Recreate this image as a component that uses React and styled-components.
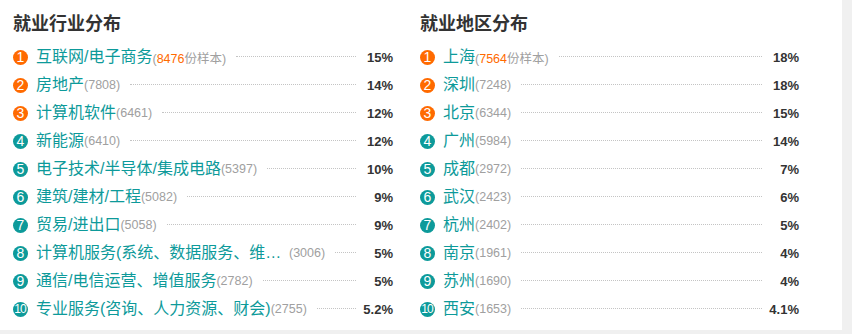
import React from 'react';
import styled, { createGlobalStyle } from 'styled-components';

const GlobalStyle = createGlobalStyle`
  body {
    margin: 0;
    background: #f0f0f0;
    font-family: "Liberation Sans", "Noto Sans CJK SC", sans-serif;
  }
`;

const Panel = styled.section`
  width: 842px;
  height: 330px;
  box-sizing: border-box;
  background: #ffffff;
  padding: 12px 0 0 13px;
  display: grid;
  grid-template-columns: 380px 379px;
  column-gap: 27px;
`;

const Column = styled.div`
  display: flex;
  flex-direction: column;
`;

const Title = styled.h3`
  margin: 0 0 7px;
  height: 24px;
  line-height: 24px;
  font-size: 18px;
  font-weight: bold;
  color: #333333;
`;

const List = styled.ul`
  margin: 0;
  padding: 0;
  list-style: none;
`;

const Row = styled.li`
  display: flex;
  align-items: center;
  height: 28px;
`;

const Badge = styled.span`
  flex: none;
  width: 15px;
  height: 15px;
  border-radius: 50%;
  background: ${p => (p.$top ? '#ff6a00' : '#0d9a9a')};
  color: #ffffff;
  font-size: ${p => (p.$wide ? '12px' : '14px')};
  letter-spacing: ${p => (p.$wide ? '-1px' : '0')};
  text-indent: ${p => (p.$wide ? '-1px' : '0')};
  line-height: 15px;
  text-align: center;
  margin-right: 8px;
`;

const Name = styled.span`
  max-width: 246px;
  overflow: hidden;
  white-space: nowrap;
  text-overflow: ellipsis;
  font-size: 16px;
  line-height: 20px;
  color: #0d9a9a;
`;

const Count = styled.span`
  flex: none;
  font-size: 12.5px;
  color: #a0a0a0;
  margin-left: ${p => (p.$clipped ? '7px' : '0')};
`;

const Hot = styled.span`
  color: #ff6a00;
`;

const Dots = styled.span`
  flex: 1;
  min-width: 10px;
  margin-left: 10px;
  border-bottom: 1px dotted #c4c4c4;
  transform: translateY(-1px);
`;

const Percent = styled.span`
  flex: none;
  width: 37px;
  text-align: right;
  font-size: 13px;
  font-weight: bold;
  color: #333333;
`;

const industries = [
  ['互联网/电子商务', '8476', '15%'],
  ['房地产', '7808', '14%'],
  ['计算机软件', '6461', '12%'],
  ['新能源', '6410', '12%'],
  ['电子技术/半导体/集成电路', '5397', '10%'],
  ['建筑/建材/工程', '5082', '9%'],
  ['贸易/进出口', '5058', '9%'],
  ['计算机服务(系统、数据服务、维修)', '3006', '5%', true],
  ['通信/电信运营、增值服务', '2782', '5%'],
  ['专业服务(咨询、人力资源、财会)', '2755', '5.2%'],
];

const regions = [
  ['上海', '7564', '18%'],
  ['深圳', '7248', '18%'],
  ['北京', '6344', '15%'],
  ['广州', '5984', '14%'],
  ['成都', '2972', '7%'],
  ['武汉', '2423', '6%'],
  ['杭州', '2402', '5%'],
  ['南京', '1961', '4%'],
  ['苏州', '1690', '4%'],
  ['西安', '1653', '4.1%'],
];

const Ranking = ({ title, items }) => (
  <Column>
    <Title>{title}</Title>
    <List>
      {items.map(([name, count, pct, clipped], i) => (
        <Row key={name}>
          <Badge $top={i < 3} $wide={i === 9}>{i + 1}</Badge>
          <Name>{name}</Name>
          <Count $clipped={clipped}>
            {i === 0 ? (
              <>(<Hot>{count}</Hot>份样本)</>
            ) : (
              `(${count})`
            )}
          </Count>
          <Dots />
          <Percent>{pct}</Percent>
        </Row>
      ))}
    </List>
  </Column>
);

const App = () => (
  <>
    <GlobalStyle />
    <Panel>
      <Ranking title="就业行业分布" items={industries} />
      <Ranking title="就业地区分布" items={regions} />
    </Panel>
  </>
);

export default App;
